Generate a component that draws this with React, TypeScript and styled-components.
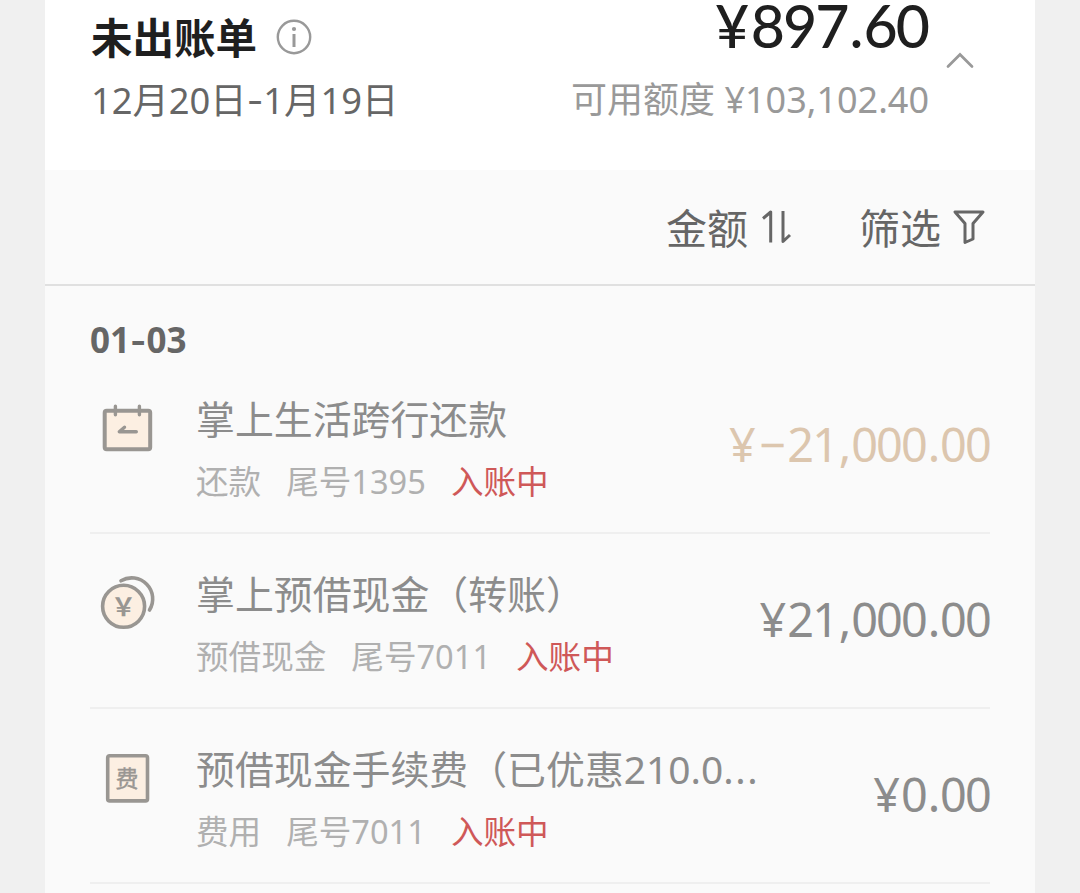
import React from "react";
import styled, { createGlobalStyle } from "styled-components";

interface Transaction {
  id: number;
  icon: React.ReactNode;
  title: string;
  truncated?: boolean;
  category: string;
  card: string;
  status: string;
  amount: string;
  income?: boolean;
}

const GlobalStyle = createGlobalStyle`
  * {
    box-sizing: border-box;
  }

  body {
    margin: 0;
    background-color: #f0f0f0;
    font-family: "Noto Sans", "Noto Sans CJK SC", sans-serif;
  }
`;

const Page = styled.div`
  height: 893px;
  padding: 0 45px;
  overflow: hidden;
`;

const Card = styled.div`
  height: 100%;
  background-color: #fafafa;
`;

const Header = styled.div`
  display: flex;
  height: 170px;
  padding: 0 60px 0 46px;
  background-color: #fff;
`;

const Period = styled.div`
  flex: 1;
  padding-top: 11px;
`;

const TitleRow = styled.div`
  display: flex;
  align-items: center;
  height: 52px;
  gap: 19px;
`;

const Title = styled.h1`
  margin: 0;
  padding-top: 2px;
  font-size: 41.5px;
  font-weight: 700;
  line-height: 56px;
  color: #1f1f1f;
`;

const DateRange = styled.div`
  margin-top: 12px;
  font-size: 36.3px;
  line-height: 50px;
  color: #666;
`;

const Dash = styled.span`
  font-family: Inter, sans-serif;
`;

const Summary = styled.div`
  text-align: right;
`;

const Total = styled.div`
  padding-right: 3px;
  font-family: Lato, "Noto Sans", sans-serif;
  font-size: 59px;
  font-weight: 500;
  line-height: 52px;
  letter-spacing: -2px;
  color: #1f1f1f;
`;

const Available = styled.div`
  margin-top: 23px;
  padding-right: 2px;
  font-size: 36px;
  line-height: 50px;
  color: #999;
`;

const Collapse = styled.div`
  padding: 50px 0 0 14px;
  line-height: 0;
`;

const Toolbar = styled.div`
  display: flex;
  justify-content: flex-end;
  align-items: center;
  gap: 66px;
  height: 116px;
  padding-right: 49px;
  border-bottom: 2px solid #e0e0e0;
`;

const ToolButton = styled.div`
  display: flex;
  align-items: center;
  gap: 11px;
  font-size: 41px;
  line-height: 56px;
  color: #666;
`;

const ToolLabel = styled.span`
  padding-top: 2px;
`;

const List = styled.div`
  padding: 0 45px;
`;

const DayHeading = styled.h2`
  height: 73px;
  margin: 0;
  padding-top: 29px;
  font-size: 35px;
  font-weight: 700;
  line-height: 50px;
  color: #666;
`;

const Row = styled.div`
  display: flex;
  height: 175px;
  border-bottom: 2px solid #efefef;
`;

const RowIcon = styled.div`
  width: 106px;
  padding: 37px 0 0 5px;
`;

const RowBody = styled.div`
  flex: 1;
  padding-top: 35px;
  white-space: nowrap;
`;

const RowTitle = styled.div`
  font-size: 38.9px;
  line-height: 50px;
  color: #8c8c8c;
`;

const Ellipsis = styled.span`
  letter-spacing: 1.6px;
`;

const RowMeta = styled.div`
  display: flex;
  gap: 25px;
  margin-top: 16px;
  font-size: 32.6px;
  line-height: 44px;
  color: #b0b0b0;
`;

const Status = styled.span`
  color: #cf5858;
`;

const Amount = styled.div<{ $income?: boolean }>`
  padding-top: 60px;
  font-size: 46.8px;
  line-height: 50px;
  letter-spacing: -1.8px;
  color: ${({ $income }) => ($income ? "#dcc6ae" : "#8c8c8c")};
`;

const Mark = styled.span<{ $wide: boolean }>`
  margin: 0 ${({ $wide }) => ($wide ? "0.06em" : "0.035em")};
`;

const Money: React.FC<{ value: string }> = ({ value }) => (
  <>
    {value.split(/([¥−.,])/).map((part, i) =>
      i % 2 === 1 ? (
        <Mark key={i} $wide={part === "¥" || part === "−"}>
          {part}
        </Mark>
      ) : (
        part
      )
    )}
  </>
);

const InfoIcon = () => (
  <svg width="36" height="36" viewBox="0 0 36 36" fill="none">
    <circle cx="18" cy="18" r="16.2" stroke="#999" strokeWidth="2.4" />
    <circle cx="18" cy="10" r="2.1" fill="#999" />
    <path d="M18 15v13" stroke="#999" strokeWidth="3" />
  </svg>
);

const ChevronIcon = () => (
  <svg width="30" height="20" viewBox="0 0 30 20" fill="none">
    <path
      d="M3 16.5 15 4.5l12 12"
      stroke="#999"
      strokeWidth="2.7"
      strokeLinecap="round"
    />
  </svg>
);

const SortIcon = () => (
  <svg width="34" height="36" viewBox="0 0 34 36" fill="none">
    <path
      d="M4 9.5 11.7 3v30.5M24 2v30.5l7-6.5"
      stroke="#666"
      strokeWidth="3"
      strokeLinejoin="round"
    />
  </svg>
);

const FilterIcon = () => (
  <svg width="34" height="36" viewBox="0 0 34 36" fill="none">
    <path
      d="M3 3h28l-10 11.5v15.5l-8 3.5v-19z"
      stroke="#666"
      strokeWidth="3"
      strokeLinejoin="round"
    />
  </svg>
);

const RepayIcon = () => (
  <svg width="64" height="64" viewBox="0 0 64 64" fill="none">
    <g stroke="#999692" strokeLinecap="round" strokeLinejoin="round">
      <rect
        x="9.7"
        y="14.7"
        width="45.5"
        height="38.5"
        rx="2"
        fill="#fcefe2"
        strokeWidth="4"
      />
      <path d="M20.4 10.2v8.5M44.4 10.2v8.5" strokeWidth="3.4" />
      <path d="M41.3 35.7h-17l5.2-4.5" strokeWidth="3.4" />
    </g>
  </svg>
);

const CashIcon = () => (
  <svg width="64" height="64" viewBox="0 0 64 64" fill="none">
    <path
      d="M26 9.8A21 21 0 0 1 54.5 39"
      stroke="#999692"
      strokeWidth="3.6"
      strokeLinecap="round"
    />
    <circle
      cx="28.6"
      cy="35.3"
      r="21"
      fill="#fcefe2"
      stroke="#999692"
      strokeWidth="3.6"
    />
    <text
      x="28.6"
      y="44.5"
      textAnchor="middle"
      fontSize="25"
      fontWeight="700"
      fill="#999692"
    >
      {"\uFFE5"}
    </text>
  </svg>
);

const FeeIcon = () => (
  <svg width="64" height="64" viewBox="0 0 64 64" fill="none">
    <rect
      x="12.7"
      y="9.7"
      width="39.8"
      height="45.2"
      rx="2"
      fill="#fcefe2"
      stroke="#999692"
      strokeWidth="3.6"
    />
    <text
      x="32"
      y="40.8"
      textAnchor="middle"
      fontSize="23"
      fill="#999692"
      stroke="#999692"
      strokeWidth="0.4"
    >
      费
    </text>
  </svg>
);

const transactions: Transaction[] = [
  {
    id: 1,
    icon: <RepayIcon />,
    title: "掌上生活跨行还款",
    category: "还款",
    card: "尾号1395",
    status: "入账中",
    amount: "¥−21,000.00",
    income: true,
  },
  {
    id: 2,
    icon: <CashIcon />,
    title: "掌上预借现金（转账）",
    category: "预借现金",
    card: "尾号7011",
    status: "入账中",
    amount: "¥21,000.00",
  },
  {
    id: 3,
    icon: <FeeIcon />,
    title: "预借现金手续费（已优惠210.0",
    truncated: true,
    category: "费用",
    card: "尾号7011",
    status: "入账中",
    amount: "¥0.00",
  },
];

const App: React.FC = () => {
  return (
    <Page lang="zh-CN">
      <GlobalStyle />
      <Card>
        <Header>
          <Period>
            <TitleRow>
              <Title>未出账单</Title>
              <InfoIcon />
            </TitleRow>
            <DateRange>
              12月20日<Dash>-</Dash>1月19日
            </DateRange>
          </Period>
          <Summary>
            <Total>
              <Money value="¥897.60" />
            </Total>
            <Available>可用额度 ¥103,102.40</Available>
          </Summary>
          <Collapse>
            <ChevronIcon />
          </Collapse>
        </Header>
        <Toolbar>
          <ToolButton>
            <ToolLabel>金额</ToolLabel>
            <SortIcon />
          </ToolButton>
          <ToolButton>
            <ToolLabel>筛选</ToolLabel>
            <FilterIcon />
          </ToolButton>
        </Toolbar>
        <List>
          <DayHeading>
            01<Dash>-</Dash>03
          </DayHeading>
          {transactions.map((item) => (
            <Row key={item.id}>
              <RowIcon>{item.icon}</RowIcon>
              <RowBody>
                <RowTitle>
                  {item.title}
                  {item.truncated && <Ellipsis>...</Ellipsis>}
                </RowTitle>
                <RowMeta>
                  <span>{item.category}</span>
                  <span>{item.card}</span>
                  <Status>{item.status}</Status>
                </RowMeta>
              </RowBody>
              <Amount $income={item.income}>
                <Money value={item.amount} />
              </Amount>
            </Row>
          ))}
        </List>
      </Card>
    </Page>
  );
};

export default App;
